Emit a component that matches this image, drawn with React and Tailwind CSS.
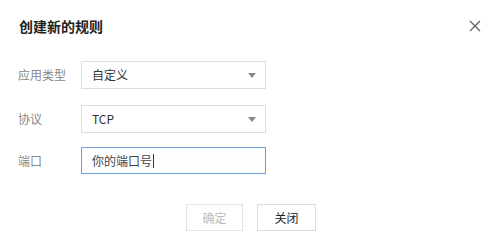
import React from 'react';

const Arrow = () => (
  <svg width="8" height="5" viewBox="0 0 8 5" className="text-[#888]">
    <path d="M0 0h8L4 5z" fill="currentColor" />
  </svg>
);

const App = () => {
  return (
    <div className="w-[500px] h-[252px] bg-white relative" style={{ fontFamily: '"Noto Sans CJK SC", "Noto Sans", sans-serif' }}>
      <div className="flex items-center justify-between pl-[19px] pr-[19px] pt-[15px]">
        <h2 className="text-[14px] font-bold text-[#222] leading-[22px]">创建新的规则</h2>
        <button type="button" className="text-[#666]">
          <svg width="12" height="12" viewBox="0 0 12 12">
            <path d="M1 1l10 10M11 1L1 11" stroke="currentColor" strokeWidth="1.4" />
          </svg>
        </button>
      </div>

      <div className="flex flex-col pl-[18px] mt-[24px]">
        <div className="flex items-center h-[28px]">
          <span className="w-[63px] text-[12px] text-[#888]">应用类型</span>
          <div className="w-[185px] h-[28px] border border-[#dcdcdc] flex items-center justify-between pl-[10px] pr-[9px]">
            <span className="text-[12px] text-[#333]">自定义</span>
            <Arrow />
          </div>
        </div>
        <div className="flex items-center h-[28px] mt-[16px]">
          <span className="w-[63px] text-[12px] text-[#888]">协议</span>
          <div className="w-[185px] h-[28px] border border-[#dcdcdc] flex items-center justify-between pl-[10px] pr-[9px]">
            <span className="text-[12px] text-[#333]">TCP</span>
            <Arrow />
          </div>
        </div>
        <div className="flex items-center h-[27px] mt-[14px]">
          <span className="w-[63px] text-[12px] text-[#888]">端口</span>
          <div className="w-[185px] h-[27px] border border-[#6f9fd8] bg-[#fdfeff] flex items-center pl-[10px]">
            <span className="text-[12px] text-[#444]">你的端口号</span>
            <span className="w-px h-[14px] bg-[#333] ml-px"></span>
          </div>
        </div>
      </div>

      <div className="flex justify-center gap-[14px] mt-[30px] pl-[2px]">
        <button type="button" className="w-[57px] h-[27px] border border-[#e2e2e2] text-[12px] text-[#bbb] bg-white">确定</button>
        <button type="button" className="w-[59px] h-[27px] border border-[#dcdcdc] text-[12px] text-[#222] bg-white">关闭</button>
      </div>
    </div>
  );
};

export default App;
